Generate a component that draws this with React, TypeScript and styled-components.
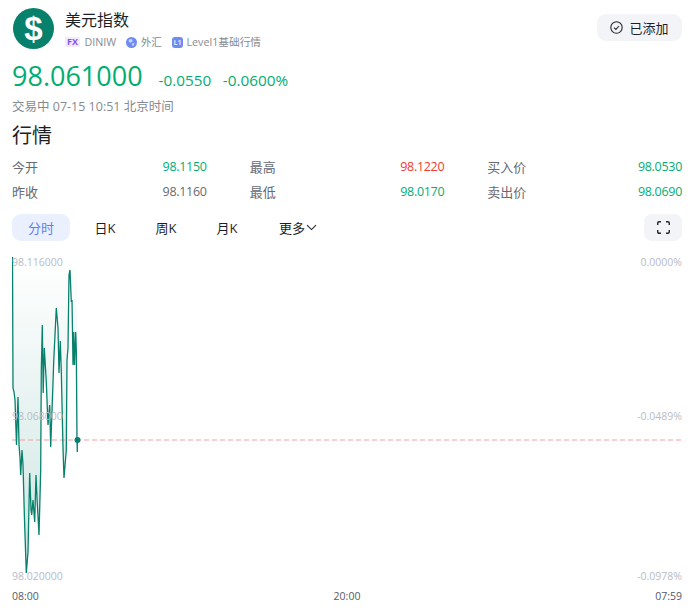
import React from "react";
import styled, { createGlobalStyle } from "styled-components";

const GlobalStyle = createGlobalStyle`
  html, body {
    margin: 0;
    background: #fff;
    font-family: "Open Sans", "Noto Sans CJK SC", sans-serif;
    overflow: hidden;
  }
`;

const GREEN = "#02ad72";

const points: [number, number][] = [
  [12.5, 257], [13, 388], [14, 392], [15, 400], [16.5, 445], [18, 397], [19, 445],
  [20, 458], [20.7, 475], [22, 450], [23, 465], [24.5, 520], [26.3, 573], [28, 552],
  [29.7, 473], [31, 510], [31.7, 515], [33, 500], [34.7, 522], [36, 475], [37, 498],
  [39, 535], [40.7, 470], [41.3, 370], [42.3, 325], [43.2, 393], [44.3, 348], [46.3, 382],
  [48, 425], [49.7, 405], [50.7, 447], [53, 383], [53.7, 362], [56.3, 308], [58, 328],
  [59, 373], [60.3, 341], [61.3, 372], [63, 448], [64, 478], [66.3, 450], [67, 360],
  [68, 348], [69, 275], [70, 270], [71.3, 302], [72, 300], [73, 365], [73.7, 332],
  [74.5, 365], [75.7, 332], [76.3, 350], [77, 440], [77.3, 452], [77.3, 440],
];

const linePoints = points.map((p) => p.join(",")).join(" ");
const areaPoints = `${linePoints} 77.3,257 12.5,257`;

const quotes = [
  { label: "今开", value: "98.1150", tone: GREEN },
  { label: "最高", value: "98.1220", tone: "#f4392f" },
  { label: "买入价", value: "98.0530", tone: GREEN },
  { label: "昨收", value: "98.1160", tone: "#666a72" },
  { label: "最低", value: "98.0170", tone: GREEN },
  { label: "卖出价", value: "98.0690", tone: GREEN },
];

const tabs = ["分时", "日K", "周K", "月K"];

const App = () => {
  return (
    <>
      <GlobalStyle />
      <Page>
        <Header>
          <Logo>$</Logo>
          <TitleBlock>
            <Title>美元指数</Title>
            <Tags>
              <Tag>
                <FxBadge>FX</FxBadge>
                DINIW
              </Tag>
              <Tag>
                <svg width="11" height="11" viewBox="0 0 11 11">
                  <circle cx="5.5" cy="5.5" r="5.5" fill="#6f8bf0" />
                  <path d="M3 2.6 L6 2 L6.6 4.4 L4.4 5.8 L2.6 4.6 Z M6.4 6.2 L8.6 5.8 L7.6 8.8 L5.8 8.4 Z" fill="#c9d5fa" />
                </svg>
                外汇
              </Tag>
              <Tag>
                <LevelBadge>L1</LevelBadge>
                Level1基础行情
              </Tag>
            </Tags>
          </TitleBlock>
          <AddButton>
            <svg width="13" height="13" viewBox="0 0 13 13" fill="none" stroke="#23262e" strokeWidth="1.1">
              <circle cx="6.5" cy="6.5" r="5.7" />
              <path d="M4 6.6 L5.9 8.4 L9 5" />
            </svg>
            已添加
          </AddButton>
        </Header>

        <PriceRow>
          <Price>98.061000</Price>
          <Change>-0.0550</Change>
          <Change>-0.0600%</Change>
        </PriceRow>
        <Status>交易中 07-15 10:51 北京时间</Status>
        <Heading>行情</Heading>

        <QuoteGrid>
          {quotes.map((q) => (
            <QuoteCell key={q.label}>
              <span>{q.label}</span>
              <QuoteValue $tone={q.tone}>{q.value}</QuoteValue>
            </QuoteCell>
          ))}
        </QuoteGrid>

        <Toolbar>
          <Tabs>
            {tabs.map((t, i) => (
              <Tab key={t} $active={i === 0}>
                {t}
              </Tab>
            ))}
            <MoreTab>
              更多
              <svg width="11" height="7" viewBox="0 0 11 7" fill="none" stroke="#23262e" strokeWidth="1.1">
                <path d="M1 1.2 L5.5 5.6 L10 1.2" />
              </svg>
            </MoreTab>
          </Tabs>
          <ExpandButton>
            <svg width="13" height="13" viewBox="0 0 13 13" fill="none" stroke="#23262e" strokeWidth="1.4">
              <path d="M0.7 4 V2.2 Q0.7 0.7 2.2 0.7 H4" />
              <path d="M9 0.7 H10.8 Q12.3 0.7 12.3 2.2 V4" />
              <path d="M12.3 9 V10.8 Q12.3 12.3 10.8 12.3 H9" />
              <path d="M4 12.3 H2.2 Q0.7 12.3 0.7 10.8 V9" />
            </svg>
          </ExpandButton>
        </Toolbar>

        <Chart>
          <ChartSvg viewBox="12 255 670 328">
            <defs>
              <linearGradient id="area" x1="0" y1="0" x2="0" y2="1">
                <stop offset="0" stopColor="#07806c" stopOpacity="0" />
                <stop offset="1" stopColor="#07806c" stopOpacity="0.2" />
              </linearGradient>
            </defs>
            <polygon points={areaPoints} fill="url(#area)" />
            <line x1="12" y1="440" x2="682" y2="440" stroke="#f2a0a0" strokeWidth="1" strokeDasharray="5 3" />
            <polyline points={linePoints} fill="none" stroke="#07806c" strokeWidth="1.3" />
            <circle cx="77.5" cy="440" r="3" fill="#07806c" />
          </ChartSvg>
          <ScaleLabel $top={1}>98.116000</ScaleLabel>
          <ScaleLabel $top={155}>98.068000</ScaleLabel>
          <ScaleLabel $top={315}>98.020000</ScaleLabel>
          <ScaleLabel $top={1} $right>0.0000%</ScaleLabel>
          <ScaleLabel $top={155} $right>-0.0489%</ScaleLabel>
          <ScaleLabel $top={315} $right>-0.0978%</ScaleLabel>
        </Chart>

        <TimeAxis>
          <span>08:00</span>
          <span>20:00</span>
          <span>07:59</span>
        </TimeAxis>
      </Page>
    </>
  );
};

export default App;

const Page = styled.div`
  width: 670px;
  padding: 8px 17px 0 12px;
  color: #23262e;
`;

const Header = styled.div`
  display: flex;
  align-items: flex-start;
  height: 41px;
`;

const Logo = styled.div`
  width: 41px;
  height: 41px;
  margin-left: 1px;
  border-radius: 50%;
  background: #07806c;
  color: #fff;
  font-family: "Liberation Sans", sans-serif;
  font-size: 33px;
  font-weight: 700;
  line-height: 41px;
  text-align: center;
`;

const TitleBlock = styled.div`
  margin-left: 11px;
  flex: 1;
`;

const Title = styled.div`
  font-size: 16px;
  line-height: 24px;
  color: #1d1f24;
`;

const Tags = styled.div`
  display: flex;
  align-items: center;
  gap: 10px;
  margin-top: 2px;
`;

const Tag = styled.div`
  display: flex;
  align-items: center;
  gap: 3.5px;
  font-size: 10.7px;
  line-height: 16px;
  color: #868a92;
`;

const FxBadge = styled.span`
  width: 15px;
  height: 10px;
  background: #f1ebfe;
  color: #8b4df0;
  border-radius: 1px;
  font-size: 9px;
  font-weight: 700;
  line-height: 10px;
  text-align: center;
  margin-right: 1px;
`;

const LevelBadge = styled.span`
  width: 11px;
  height: 11px;
  background: #6f8bf0;
  color: #dfe6fc;
  border-radius: 3px;
  font-size: 7px;
  font-weight: 700;
  line-height: 11px;
  text-align: center;
`;

const AddButton = styled.div`
  width: 85px;
  height: 27px;
  margin-top: 6px;
  border-radius: 9px;
  background: #f3f4f8;
  display: flex;
  align-items: center;
  justify-content: center;
  gap: 6px;
  font-size: 13px;
  color: #1d1f24;
`;

const PriceRow = styled.div`
  display: flex;
  align-items: baseline;
  margin-top: 11px;
  height: 32px;
  color: ${GREEN};
`;

const Price = styled.div`
  font-size: 27px;
  line-height: 32px;
  margin-right: 16px;
`;

const Change = styled.div`
  font-size: 15.3px;
  line-height: 32px;
  margin-right: 11.5px;
`;

const Status = styled.div`
  margin-top: 6px;
  font-size: 12.5px;
  line-height: 18px;
  color: #868a92;
`;

const Heading = styled.div`
  margin-top: 6px;
  font-size: 20px;
  line-height: 28px;
  color: #1d1f24;
`;

const QuoteGrid = styled.div`
  margin-top: 4px;
  display: grid;
  grid-template-columns: repeat(3, 1fr);
  column-gap: 43px;
`;

const QuoteCell = styled.div`
  display: flex;
  justify-content: space-between;
  align-items: center;
  height: 25px;
  font-size: 13px;
  color: #666a72;
`;

const QuoteValue = styled.span<{ $tone: string }>`
  font-size: 12.5px;
  letter-spacing: -0.3px;
  color: ${(p) => p.$tone};
`;

const Toolbar = styled.div`
  margin-top: 10px;
  display: flex;
  justify-content: space-between;
`;

const Tabs = styled.div`
  display: flex;
  gap: 3px;
`;

const Tab = styled.div<{ $active?: boolean }>`
  width: 58px;
  height: 27px;
  border-radius: 9px;
  display: flex;
  align-items: center;
  justify-content: center;
  font-size: 13px;
  background: ${(p) => (p.$active ? "#eaf0fe" : "transparent")};
  color: ${(p) => (p.$active ? "#5b7ff5" : "#1d1f24")};
  margin-right: ${(p) => (p.$active ? "3px" : "0")};
`;

const MoreTab = styled.div`
  height: 27px;
  padding: 0 20px;
  display: flex;
  align-items: center;
  gap: 1px;
  font-size: 13px;
  color: #1d1f24;
`;

const ExpandButton = styled.div`
  width: 38px;
  height: 27px;
  border-radius: 8px;
  background: #f3f4f8;
  display: flex;
  align-items: center;
  justify-content: center;
`;

const Chart = styled.div`
  position: relative;
  margin-top: 14px;
  height: 328px;
`;

const ChartSvg = styled.svg`
  display: block;
  width: 670px;
  height: 328px;
`;

const ScaleLabel = styled.span<{ $top: number; $right?: boolean }>`
  position: absolute;
  top: ${(p) => p.$top}px;
  ${(p) => (p.$right ? "right: 0;" : "left: 0;")}
  font-size: 10.5px;
  line-height: 13px;
  color: #b9bbc6;
`;

const TimeAxis = styled.div`
  display: flex;
  justify-content: space-between;
  height: 24px;
  padding-top: 1px;
  box-sizing: border-box;
  align-items: center;
  font-size: 10.5px;
  color: #555a66;
`;
